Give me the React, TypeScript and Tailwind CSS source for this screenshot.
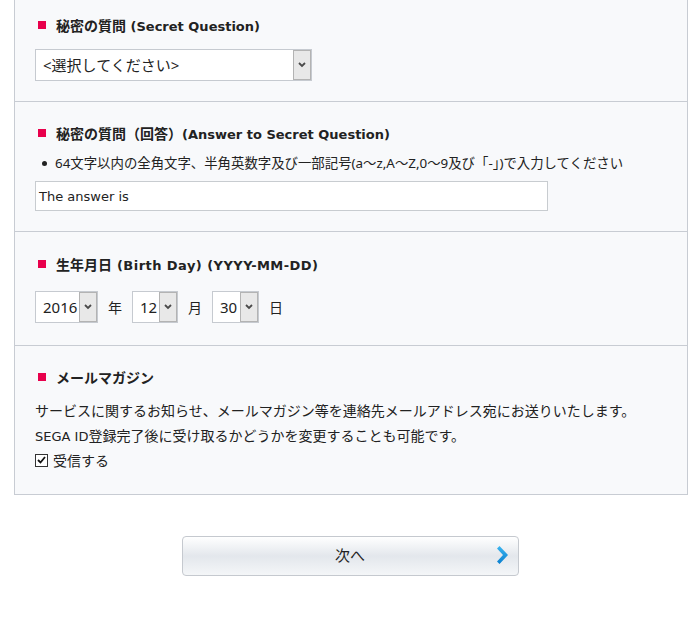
import React from "react";

function L({ children, bold, extra }: { children: React.ReactNode; bold?: boolean; extra?: string }) {
  return (
    <span className={`font-['DejaVu_Sans',sans-serif] text-[13px] leading-none ${bold ? "font-bold" : "font-normal"} ${extra ?? ""}`}>
      {children}
    </span>
  );
}

function Title({ children }: { children: React.ReactNode }) {
  return (
    <div className="flex items-center h-[20px] text-[14px] font-bold text-[#222]">
      <span className="w-[8px] h-[8px] bg-[#e8004c] ml-[3px] mr-[10px] shrink-0" />
      <span className="whitespace-pre">{children}</span>
    </div>
  );
}

function Arrow() {
  return (
    <svg width="8" height="6" viewBox="0 0 8 6">
      <path d="M1 1 L4 4 L7 1" fill="none" stroke="#4a4a4a" strokeWidth="1.8" />
    </svg>
  );
}

function FakeSelect({ value, width }: { value: React.ReactNode; width: string }) {
  return (
    <div className={`flex h-[32px] border border-[#c6cad0] bg-white ${width}`}>
      <div className="flex-1 flex items-center pl-[7px] text-[#222] text-[15px]">{value}</div>
      <div className="w-[18px] bg-[#e8e8e8] border border-[#b3b3b3] flex items-center justify-center">
        <Arrow />
      </div>
    </div>
  );
}

export default function App() {
  return (
    <div className="w-[700px] h-[622px] bg-white font-['Noto_Sans','Noto_Sans_CJK_JP',sans-serif]">
      <div className="ml-[14px] w-[674px] border-l border-r border-b border-[#c8ccd3] bg-[#f8f9fb]">
        {/* Section 1 */}
        <div className="pl-[20px] pt-[15px] pb-[20px] border-b border-[#c8ccd3]">
          <Title>
            秘密の質問<L bold> (Secret Question)</L>
          </Title>
          <div className="mt-[14px]">
            <FakeSelect value="<選択してください>" width="w-[277px]" />
          </div>
        </div>
        {/* Section 2 */}
        <div className="pl-[20px] pt-[21px] pb-[20px] border-b border-[#c8ccd3]">
          <Title>
            秘密の質問（回答）<L bold>(Answer to Secret Question)</L>
          </Title>
          <div className="mt-[10px] flex items-center h-[20px] text-[13.4px] text-[#222]">
            <span className="w-[5px] h-[5px] rounded-full bg-[#222] ml-[7px] mr-[8px]" />
            <span>64文字以内の全角文字、半角英数字及び一部記号(a～z,A～Z,0～9及び「-」)で入力してください</span>
          </div>
          <div className="mt-[8px] w-[513px] h-[30px] border border-[#c8ccd0] bg-white flex items-center pl-[3px] text-[14px] text-[#222]">
            <L>The answer is</L>
          </div>
        </div>
        {/* Section 3 */}
        <div className="pl-[20px] pt-[22px] pb-[22px] border-b border-[#c8ccd3]">
          <Title>
            生年月日<L bold extra="tracking-[0.45px]"> (Birth Day) (YYYY-MM-DD)</L>
          </Title>
          <div className="mt-[17px] flex items-center text-[14px] text-[#222]">
            <FakeSelect value="2016" width="w-[63px]" />
            <span className="ml-[10px] mr-[10px]">年</span>
            <FakeSelect value="12" width="w-[46px]" />
            <span className="ml-[10px] mr-[10px]">月</span>
            <FakeSelect value="30" width="w-[47px]" />
            <span className="ml-[10px]">日</span>
          </div>
        </div>
        {/* Section 4 */}
        <div className="pl-[20px] pt-[21px] pb-[22px]">
          <Title>メールマガジン</Title>
          <div className="mt-[11px] text-[14px] leading-[25px] text-[#222]">
            <div>サービスに関するお知らせ、メールマガジン等を連絡先メールアドレス宛にお送りいたします。</div>
            <div>
              <L>SEGA ID</L>登録完了後に受け取るかどうかを変更することも可能です。
            </div>
          </div>
          <div className="flex items-center h-[24px] text-[14px] text-[#222]">
            <span className="w-[13px] h-[13px] border border-[#333] bg-white flex items-center justify-center mr-[5px]">
              <svg width="9" height="8" viewBox="0 0 9 8">
                <path d="M1 4 L3.5 6.5 L8 1" fill="none" stroke="#111" strokeWidth="1.8" />
              </svg>
            </span>
            <span>受信する</span>
          </div>
        </div>
      </div>
      <div className="flex justify-center mt-[41px]">
        <div className="relative w-[337px] h-[40px] rounded-[4px] border border-[#c5c9cf] bg-gradient-to-b from-[#ffffff] via-[#e3e7ec] to-[#f4f6f8] flex items-center justify-center text-[15px] text-[#222] pb-[2px]">
          次へ
          <svg className="absolute right-[10px] top-[9px]" width="12" height="18" viewBox="0 0 12 18">
            <defs>
              <linearGradient id="g" x1="0" y1="0" x2="0" y2="1">
                <stop offset="0" stopColor="#3bb5f0" />
                <stop offset="1" stopColor="#0a7fcf" />
              </linearGradient>
            </defs>
            <path d="M1 2.5 L3.5 0 L12 9 L3.5 18 L1 15.5 L7 9 Z" fill="url(#g)" />
          </svg>
        </div>
      </div>
    </div>
  );
}
